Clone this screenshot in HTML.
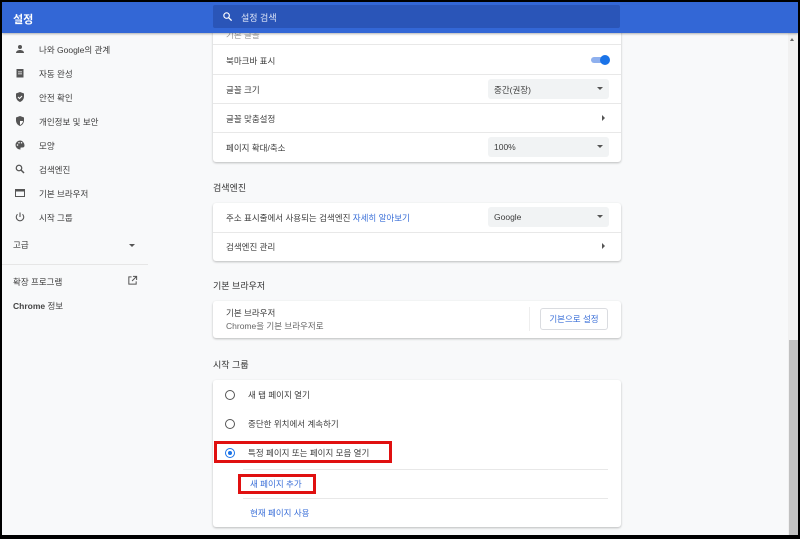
<!DOCTYPE html>
<html><head><meta charset="utf-8"><style>
*{margin:0;padding:0;box-sizing:border-box}
body{width:800px;height:539px;background:#000;position:relative;overflow:hidden;font-family:"Liberation Sans","Noto Sans CJK KR",sans-serif;font-size:8.5px;color:#3c3c3c}
.pg{position:absolute;left:2px;top:2px;width:796px;height:533px;background:#f8f9fa;overflow:hidden}
.a{position:absolute;white-space:nowrap}
.hdr{position:absolute;left:0;top:0;width:796px;height:31px;background:#3367d6;box-shadow:0 1px 2px rgba(0,0,0,.3);z-index:10}
.card{position:absolute;left:211px;width:408px;background:#fff;border-radius:3px;box-shadow:0 1px 2px rgba(0,0,0,.25)}
.dv{position:absolute;height:1px;background:#e8e8e8}
.sel{position:absolute;left:275px;width:121px;height:20px;background:#f1f3f4;border-radius:3px}
.sel span{position:absolute;left:6px;top:5px}
.sel i{position:absolute;right:6px;top:8px;border-left:3px solid transparent;border-right:3px solid transparent;border-top:3px solid #555}
.arr{position:absolute;right:16px;border-top:3px solid transparent;border-bottom:3px solid transparent;border-left:3px solid #555}
.ico{position:absolute;left:12px;width:12px;height:12px}
.sb{position:absolute;left:37px}
.ttl{position:absolute;left:211px;font-size:9px;color:#333}
.rad{position:absolute;left:12px;width:10px;height:10px;border:1.5px solid #555;border-radius:50%}
.red{position:absolute;border:3px solid #e01010;z-index:5}
.lnk{color:#3a6fd8}
</style></head><body><div class="pg">
<div class="hdr">
<div class="a" style="left:11px;top:9px;color:#fff;font-size:11px;font-weight:bold">설정</div>
<div class="a" style="left:211px;top:3px;width:407px;height:23px;background:#2a55b8;border-radius:2px">
<svg class="a" style="left:9px;top:6px" width="11" height="11" viewBox="0 0 24 24"><circle cx="10" cy="10" r="6" fill="none" stroke="#fff" stroke-width="2.5"/><path d="M14.5 14.5L21 21" stroke="#fff" stroke-width="2.8"/></svg>
<span class="a" style="left:28px;top:6px;color:#dfe6f7;font-size:9px">설정 검색</span></div>
</div>
<!-- sidebar -->
<svg class="ico" style="top:41px" viewBox="0 0 24 24"><circle cx="12" cy="8" r="4" fill="#555"/><path d="M4 20c0-4 4-6 8-6s8 2 8 6z" fill="#555"/></svg><div class="a sb" style="top:42px">나와 Google의 관계</div>
<svg class="ico" style="top:65px" viewBox="0 0 24 24"><rect x="5" y="4" width="14" height="17" fill="#555"/><rect x="8" y="9" width="8" height="1.5" fill="#fff"/><rect x="8" y="13" width="8" height="1.5" fill="#fff"/></svg><div class="a sb" style="top:66px">자동 완성</div>
<svg class="ico" style="top:89px" viewBox="0 0 24 24"><path d="M12 2L4 5v6c0 5 3.5 9.5 8 11 4.5-1.5 8-6 8-11V5z" fill="#555"/><path d="M8 12l3 3 5-5" stroke="#fff" stroke-width="2" fill="none"/></svg><div class="a sb" style="top:90px">안전 확인</div>
<svg class="ico" style="top:113px" viewBox="0 0 24 24"><path d="M12 2L4 5v6c0 5 3.5 9.5 8 11 4.5-1.5 8-6 8-11V5z" fill="#555"/><path d="M12 5v7h6c0 3-3 7-6 8z" fill="#fff"/></svg><div class="a sb" style="top:114px">개인정보 및 보안</div>
<svg class="ico" style="top:137px" viewBox="0 0 24 24"><path d="M12 3a9 9 0 000 18c1 0 1.5-.8 1-1.6-.6-1 0-2.4 1.5-2.4H17a4 4 0 004-4c0-5-4-10-9-10z" fill="#555"/><circle cx="7" cy="12" r="1.5" fill="#fff"/><circle cx="10" cy="7.5" r="1.5" fill="#fff"/><circle cx="15" cy="7.5" r="1.5" fill="#fff"/></svg><div class="a sb" style="top:138px">모양</div>
<svg class="ico" style="top:161px" viewBox="0 0 24 24"><circle cx="10" cy="10" r="5.5" fill="none" stroke="#555" stroke-width="2.5"/><path d="M14 14l6 6" stroke="#555" stroke-width="3"/></svg><div class="a sb" style="top:162px">검색엔진</div>
<svg class="ico" style="top:185px" viewBox="0 0 24 24"><rect x="3" y="5" width="18" height="14" fill="none" stroke="#555" stroke-width="2"/><rect x="3" y="5" width="18" height="4" fill="#555"/></svg><div class="a sb" style="top:186px">기본 브라우저</div>
<svg class="ico" style="top:209px" viewBox="0 0 24 24"><path d="M12 3v9" stroke="#555" stroke-width="2.2"/><path d="M7 6.5a7.5 7.5 0 1010 0" fill="none" stroke="#555" stroke-width="2.2"/></svg><div class="a sb" style="top:210px">시작 그룹</div>
<div class="a" style="left:11px;top:237px">고급</div>
<div class="a" style="left:127px;top:242px;border-left:3px solid transparent;border-right:3px solid transparent;border-top:3px solid #555"></div>
<div class="a" style="left:0;top:262px;width:146px;height:1px;background:#e6e6e6"></div>
<div class="a" style="left:11px;top:274px">확장 프로그램</div>
<svg class="a" style="left:125px;top:273px" width="11" height="11" viewBox="0 0 24 24"><path d="M10 4H4v16h16v-6" fill="none" stroke="#555" stroke-width="2.2"/><path d="M13 3h8v8M21 3L11 13" fill="none" stroke="#555" stroke-width="2.2"/></svg>
<div class="a" style="left:11px;top:298px;font-weight:bold;color:#444">Chrome <span style="font-weight:normal">정보</span></div>
<!-- card1 -->
<div class="card" style="top:20px;height:140px">
<div class="a" style="left:13px;top:7px;color:#999">기본 글꼴</div>
<div class="dv" style="left:0;right:0;top:22px"></div>
<div class="a" style="left:13px;top:33px">북마크바 표시</div>
<div class="a" style="left:378px;top:35px;width:16px;height:6px;background:#8fb0ee;border-radius:3px"></div>
<div class="a" style="left:387px;top:33px;width:10px;height:10px;background:#1a73e8;border-radius:50%"></div>
<div class="dv" style="left:0;right:0;top:52px"></div>
<div class="a" style="left:13px;top:62px">글꼴 크기</div>
<div class="sel" style="top:57px"><span>중간(권장)</span><i></i></div>
<div class="dv" style="left:0;right:0;top:81px"></div>
<div class="a" style="left:13px;top:91px">글꼴 맞춤설정</div><div class="arr" style="top:93px"></div>
<div class="dv" style="left:0;right:0;top:110px"></div>
<div class="a" style="left:13px;top:120px">페이지 확대/축소</div>
<div class="sel" style="top:115px"><span>100%</span><i></i></div>
</div>
<div class="ttl" style="top:179px">검색엔진</div>
<div class="card" style="top:201px;height:58px">
<div class="a" style="left:13px;top:9px">주소 표시줄에서 사용되는 검색엔진 <span class="lnk">자세히 알아보기</span></div>
<div class="sel" style="top:4px"><span>Google</span><i></i></div>
<div class="dv" style="left:0;right:0;top:29px"></div>
<div class="a" style="left:13px;top:38px">검색엔진 관리</div><div class="arr" style="top:40px"></div>
</div>
<div class="ttl" style="top:277px">기본 브라우저</div>
<div class="card" style="top:299px;height:37px">
<div class="a" style="left:13px;top:6px">기본 브라우저</div>
<div class="a" style="left:13px;top:19px;color:#666">Chrome을 기본 브라우저로</div>
<div class="a" style="left:316px;top:6px;width:1px;height:24px;background:#eee"></div>
<div class="a lnk" style="left:327px;top:7px;width:68px;height:22px;border:1px solid #dadce0;border-radius:3px;text-align:center;line-height:20px">기본으로 설정</div>
</div>
<div class="ttl" style="top:356px">시작 그룹</div>
<div class="card" style="top:378px;height:147px">
<div class="rad" style="top:10px"></div><div class="a" style="left:35px;top:9px">새 탭 페이지 열기</div>
<div class="rad" style="top:39px"></div><div class="a" style="left:35px;top:38px">중단한 위치에서 계속하기</div>
<div class="rad" style="top:68px;border-color:#1a73e8"><div style="position:absolute;left:1.5px;top:1.5px;width:4px;height:4px;background:#1a73e8;border-radius:50%"></div></div><div class="a" style="left:35px;top:67px">특정 페이지 또는 페이지 모음 열기</div>
<div class="dv" style="left:30px;right:13px;top:89px"></div>
<div class="a lnk" style="left:37px;top:98px">새 페이지 추가</div>
<div class="dv" style="left:30px;right:13px;top:118px"></div>
<div class="a lnk" style="left:37px;top:127px">현재 페이지 사용</div>
</div>
<div class="red" style="left:212px;top:439px;width:178px;height:22px"></div>
<div class="red" style="left:236px;top:472px;width:78px;height:20px"></div>
<!-- scrollbar -->
<div class="a" style="left:786px;top:31px;width:10px;height:502px;background:#f1f1f1"></div>
<div class="a" style="left:788px;top:36px;border-left:2px solid transparent;border-right:2px solid transparent;border-bottom:3px solid #666"></div>
<div class="a" style="left:787px;top:338px;width:9px;height:195px;background:#c1c1c1"></div>
</div></body></html>
